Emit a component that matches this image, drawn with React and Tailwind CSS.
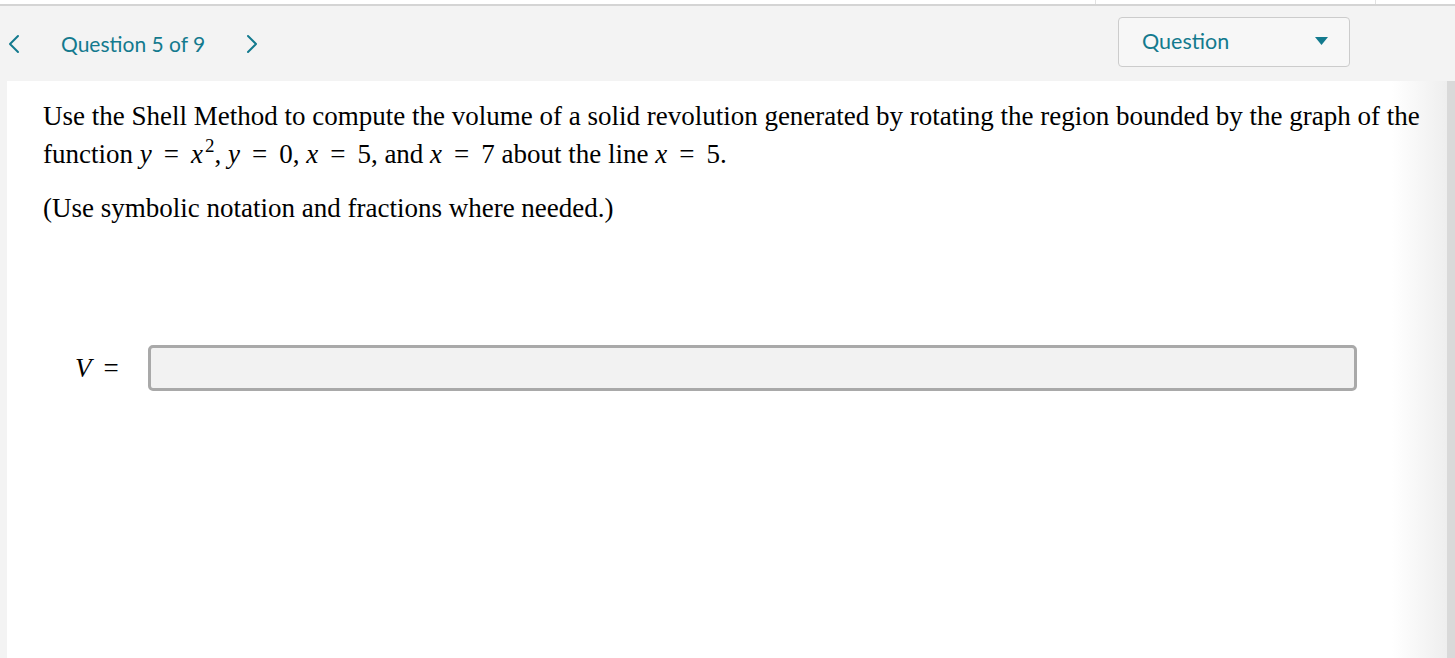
import React from 'react';

const TEAL = 'text-[#137a8e]';

function Chevron({ dir }) {
  return (
    <svg width="12" height="20" viewBox="0 0 12 20" fill="none" stroke="#137a8e" strokeWidth="2" strokeLinecap="round" strokeLinejoin="round">
      {dir === 'left' ? <path d="M10 2 L2 10 L10 18" /> : <path d="M2 2 L10 10 L2 18" />}
    </svg>
  );
}

// math "=" with MathJax-like spacing
const Eq = () => <span className="mx-[12px]">=</span>;

export default function App() {
  return (
    <div className="h-[658px] w-[1455px] overflow-hidden bg-[#f3f3f3] flex flex-col font-['Lato',sans-serif]">
      {/* top strip */}
      <div className="h-[6px] bg-white border-b-2 border-[#d4d4d4] flex">
        <div className="w-[1095px]" />
        <div className="w-[281px] border-x border-[#e2e2e2]" />
      </div>

      {/* header */}
      <div className="h-[75px] flex items-center pr-[105px]">
        <button className="pl-[8px] pt-[1px]"><Chevron dir="left" /></button>
        <span className={`ml-[41px] text-[21px] ${TEAL}`}>Question 5 of 9</span>
        <button className="ml-[41px] pt-[1px]"><Chevron dir="right" /></button>
        <div className="ml-auto w-[232px] h-[50px] mt-[-4px] rounded-[4px] border border-[#cccccc] bg-[#f7f7f7] flex items-center pl-[23px] pr-[21px]">
          <span className={`text-[21.5px] ${TEAL}`}>Question</span>
          <svg className="ml-auto" width="13" height="9" viewBox="0 0 13 9"><path d="M0 0 H13 L6.5 8 Z" fill="#137a8e" /></svg>
        </div>
      </div>

      {/* body */}
      <div className="flex-1 flex">
        <div className="ml-[7px] w-[1440px] bg-[linear-gradient(to_right,#ffffff_calc(100%-55px),#eeeeee)] pl-[36px] pt-[16px] font-['Liberation_Serif',serif] text-[27px] text-black">
          <p className="leading-[38px] pr-[10px]">
            Use the Shell Method to compute the volume of a solid revolution generated by rotating the region bounded by the graph of the function{' '}
            <i>y</i><Eq /><i>x</i><span className="relative top-[-11px] ml-[2px] text-[19px] leading-none">2</span>, <i>y</i><Eq />0, <i>x</i><Eq />5, and <i>x</i><Eq />7 about the line <i>x</i><Eq />5.
          </p>
          <p className="mt-[16px] leading-[38px]">(Use symbolic notation and fractions where needed.)</p>
          <div className="mt-[118px] flex items-center">
            <span className="ml-[32px] w-[73px] whitespace-nowrap"><i>V</i><Eq /></span>
            <div className="w-[1209px] h-[46px] rounded-[5px] border-[3px] border-[#a9a9a9] bg-[#f2f2f2]" />
          </div>
        </div>
        <div className="flex-1 bg-[#d9d9d9]" />
      </div>
    </div>
  );
}
